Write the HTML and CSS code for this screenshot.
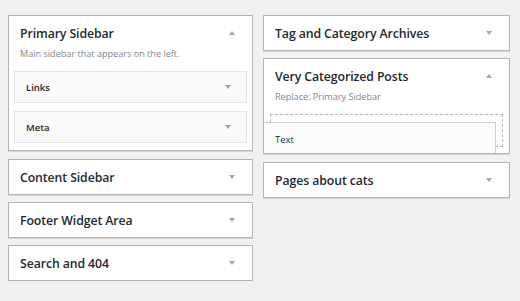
FILE: index.html
```html
<!DOCTYPE html>
<html lang="en">
    <head>
        <meta charset="UTF-8">
        <title>Widgets</title>
        <link rel="stylesheet" href="styles.css">
    </head>
    <body>
        <div class="widgets-wrap">
            <div class="widgets-col">
                <div class="sidebar-box open">
                    <div class="sidebar-head">
                        <h2 class="sidebar-title">Primary Sidebar</h2>
                        <span class="toggle up"></span>
                    </div>
                    <p class="sidebar-desc">Main sidebar that appears on the left.</p>
                    <div class="widget-list">
                        <div class="widget">
                            <h3 class="widget-title">Links</h3>
                            <span class="toggle"></span>
                        </div>
                        <div class="widget">
                            <h3 class="widget-title">Meta</h3>
                            <span class="toggle"></span>
                        </div>
                    </div>
                </div>
                <div class="sidebar-box">
                    <div class="sidebar-head">
                        <h2 class="sidebar-title">Content Sidebar</h2>
                        <span class="toggle"></span>
                    </div>
                </div>
                <div class="sidebar-box">
                    <div class="sidebar-head">
                        <h2 class="sidebar-title">Footer Widget Area</h2>
                        <span class="toggle"></span>
                    </div>
                </div>
                <div class="sidebar-box">
                    <div class="sidebar-head">
                        <h2 class="sidebar-title">Search and 404</h2>
                        <span class="toggle"></span>
                    </div>
                </div>
            </div>

            <div class="widgets-col wide">
                <div class="sidebar-box">
                    <div class="sidebar-head">
                        <h2 class="sidebar-title">Tag and Category Archives</h2>
                        <span class="toggle"></span>
                    </div>
                </div>
                <div class="sidebar-box open">
                    <div class="sidebar-head">
                        <h2 class="sidebar-title">Very Categorized Posts</h2>
                        <span class="toggle up"></span>
                    </div>
                    <p class="sidebar-desc">Replace: Primary Sidebar</p>
                    <div class="widget-list drop-list">
                        <div class="drop-placeholder">
                            <div class="widget dragging">
                                <h3 class="widget-title">Text</h3>
                            </div>
                        </div>
                    </div>
                </div>
                <div class="sidebar-box">
                    <div class="sidebar-head">
                        <h2 class="sidebar-title">Pages about cats</h2>
                        <span class="toggle"></span>
                    </div>
                </div>
            </div>
        </div>
    </body>
</html>
```

FILE: styles.css
```css
/* Global styles */
* {
    margin: 0;
    padding: 0;
    box-sizing: border-box;
    font-family: "Open Sans", Arial, sans-serif;
}

body {
    background-color: #f1f1f1;
    color: #23282d;
    padding: 15px 10px 0 8px;
}

.widgets-wrap {
    display: flex;
    gap: 10px;
    align-items: flex-start;
}

.widgets-col {
    width: 245px;
    display: flex;
    flex-direction: column;
    gap: 7px;
}

.widgets-col.wide {
    width: 247px;
}

.sidebar-box {
    position: relative;
    background: #fff;
    border: 1px solid #b4b4b4;
    box-shadow: 0 1px 0 rgba(0, 0, 0, 0.12);
}

/* expanded sidebars */
.sidebar-box.open {
    overflow: hidden;
    margin-bottom: 1px;
}

.sidebar-head {
    height: 34px;
    display: flex;
    align-items: center;
    justify-content: space-between;
    padding: 0 17px 0 11px;
}

.sidebar-title {
    font-size: 12.3px;
    font-weight: 600;
    letter-spacing: -0.1px;
}

.toggle {
    width: 0;
    height: 0;
    border-left: 3px solid transparent;
    border-right: 3px solid transparent;
    border-top: 4px solid #a0a5aa;
}

.toggle.up {
    border-top: none;
    border-bottom: 4px solid #a0a5aa;
}

.sidebar-desc {
    font-size: 9.1px;
    line-height: 14px;
    color: #82878c;
    margin: -3px 11px 10px;
}

.widget-list {
    display: flex;
    flex-direction: column;
    gap: 8px;
    padding: 0 5px 7px;
}

.drop-list {
    padding-bottom: 6px;
}

.widget {
    height: 32px;
    display: flex;
    align-items: center;
    justify-content: space-between;
    padding: 0 15px 0 11px;
    background: #fafafa;
    border: 1px solid #e5e5e5;
}

.widget-title {
    font-size: 9.5px;
    font-weight: 600;
}

.drop-placeholder {
    position: relative;
    height: 33px;
    margin: 0 1px;
    border: 1px dashed #b4b4b4;
}

/* widget being dragged over the placeholder */
.widget.dragging {
    position: absolute;
    left: -8px;
    top: 7px;
    width: 233px;
    height: 34px;
    background: #fcfcfc;
    border-color: #cfcfcf;
}

.widget.dragging .widget-title {
    font-weight: 400;
}
```
